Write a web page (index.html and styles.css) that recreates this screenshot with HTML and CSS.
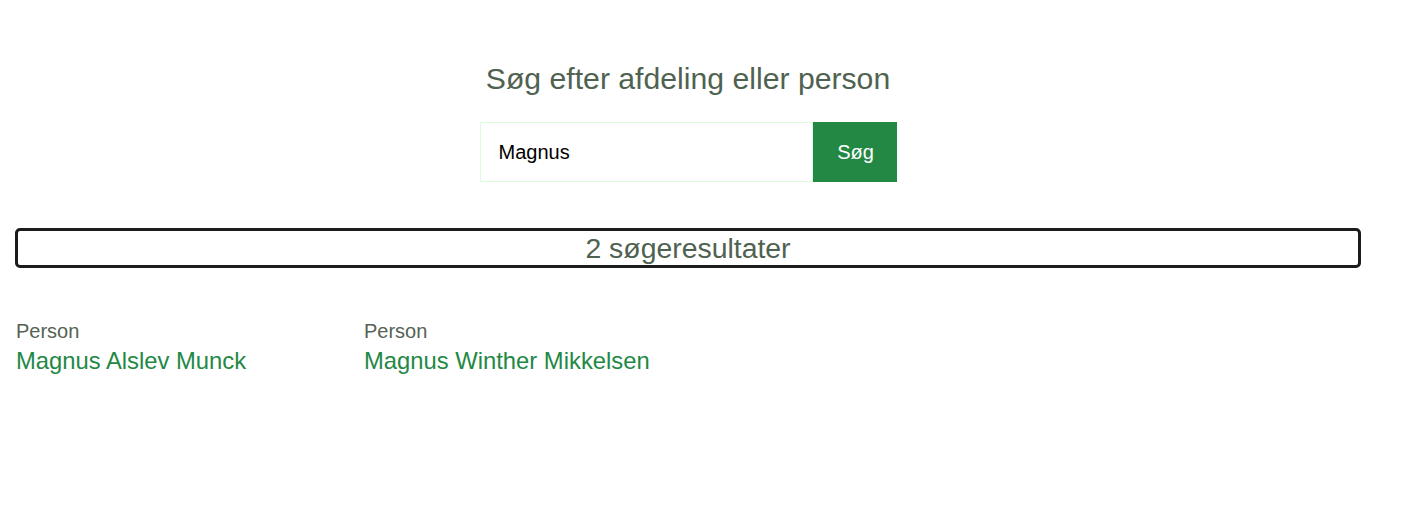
FILE: index.html
```html
<!DOCTYPE html>
<html lang="da">
<head>
<meta charset="utf-8">
<title>Søg</title>
<link rel="stylesheet" href="styles.css">
</head>
<body>
<main class="page">
  <h1 class="title">Søg efter afdeling eller person</h1>
  <form class="search">
    <input class="search-input" type="text" value="Magnus">
    <button class="search-btn" type="button">Søg</button>
  </form>
  <div class="result-count">2 søgeresultater</div>
  <ul class="results">
    <li class="result">
      <div class="result-type">Person</div>
      <a class="result-name" href="#">Magnus Alslev Munck</a>
    </li>
    <li class="result">
      <div class="result-type">Person</div>
      <a class="result-name" href="#">Magnus Winther Mikkelsen</a>
    </li>
  </ul>
</main>
</body>
</html>
```

FILE: styles.css
```css
html, body {
  margin: 0;
  padding: 0;
  background: #fff;
  font-family: "Liberation Sans", Arial, sans-serif;
}
.page {
  width: 1346px;
  padding: 0 0 0 15px;
  display: flex;
  flex-direction: column;
  align-items: stretch;
}
.title {
  margin: 61px 0 0;
  font-size: 30.2px;
  font-weight: 400;
  line-height: 36px;
  color: #4f6251;
  text-align: center;
}
.search {
  display: flex;
  justify-content: center;
  margin-top: 25px;
}
.search-input {
  box-sizing: border-box;
  width: 333px;
  height: 60px;
  border: 1px solid #ddfcdd;
  padding: 0 18px;
  font-family: "Liberation Sans", Arial, sans-serif;
  font-size: 20px;
  color: #000;
  outline: none;
}
.search-btn {
  box-sizing: border-box;
  width: 84px;
  height: 60px;
  border: none;
  padding: 0 0 0 2px;
  background: #228844;
  color: #fff;
  font-family: "Liberation Sans", Arial, sans-serif;
  font-size: 20px;
}
.result-count {
  box-sizing: border-box;
  margin-top: 46px;
  height: 40px;
  border: 3px solid #1c1c1c;
  border-radius: 5px;
  text-align: center;
  font-size: 28.4px;
  line-height: 34px;
  color: #4f6251;
}
.results {
  list-style: none;
  margin: 50px 0 0;
  padding: 0 0 0 1px;
  display: flex;
}
.result {
  width: 348px;
  display: flex;
  flex-direction: column;
}
.result-type {
  font-size: 20px;
  line-height: 24px;
  margin-top: 1px;
  color: #556255;
}
.result-name {
  font-size: 23.8px;
  line-height: 36px;
  color: #228844;
  text-decoration: none;
}
```
